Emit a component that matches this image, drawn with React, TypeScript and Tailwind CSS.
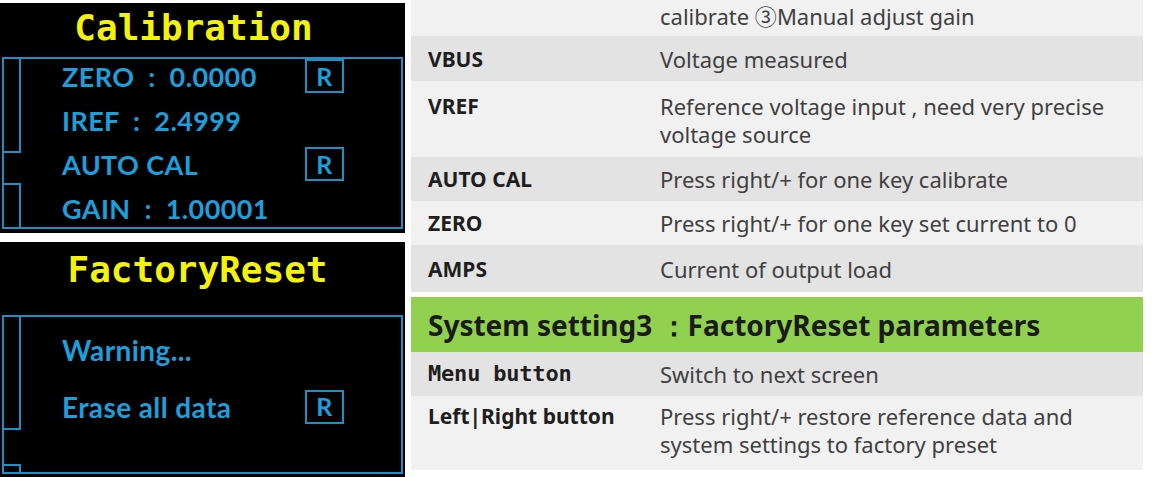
import React from "react";

const blue = "text-[#1c9fda]";

function RBox() {
  return (
    <div className="w-[39px] h-[34px] border-2 border-[#1b8fc6] flex items-center justify-center text-[#1c9fda] text-[25px] font-bold leading-none">
      R
    </div>
  );
}

function CalRow({ label, r, h }: { label: string; r?: boolean; h: string }) {
  return (
    <div className={`flex items-center ${h}`}>
      <div className="w-[284px] pl-[41px] whitespace-pre">{label}</div>
      {r ? <RBox /> : null}
    </div>
  );
}

function LeftPanels() {
  return (
    <div className="w-[405px] flex flex-col pt-[3px] gap-[9px] shrink-0">
      {/* Calibration */}
      <div className="h-[230px] bg-black flex flex-col">
        <div className="h-[54px] flex items-center justify-center pr-[18px] text-[#f2f20c] text-[36px] font-bold font-['DejaVu_Sans_Mono',monospace] leading-none pb-[4px]">
          Calibration
        </div>
        <div className="mx-[2px] h-[172px] border-2 border-[#1b8fc6] flex">
          <div className="w-[17px] flex flex-col shrink-0">
            <div className="h-[94px] border-r-2 border-b-2 border-[#1b8fc6]" />
            <div className="h-[30px]" />
            <div className="flex-1 border-r-2 border-t-2 border-[#1b8fc6]" />
          </div>
          <div className={`flex-1 flex flex-col gap-[10px] font-['Lato',sans-serif] font-bold text-[27px] tracking-[0.4px] leading-none ${blue}`}>
            <CalRow label="ZERO  :  0.0000" r h="h-[34px]" />
            <CalRow label="IREF  :  2.4999" h="h-[34px]" />
            <CalRow label="AUTO CAL" r h="h-[34px]" />
            <CalRow label="GAIN  :  1.00001" h="h-[34px]" />
          </div>
        </div>
      </div>
      {/* FactoryReset */}
      <div className="h-[235px] bg-black flex flex-col">
        <div className="h-[73px] flex items-start justify-center pr-[10px] pt-[10px] text-[#f2f20c] text-[36px] font-bold font-['DejaVu_Sans_Mono',monospace] leading-[36px]">
          FactoryReset
        </div>
        <div className="mx-[2px] h-[159px] border-2 border-[#1b8fc6] flex">
          <div className="w-[17px] flex flex-col shrink-0">
            <div className="h-[113px] border-r-2 border-b-2 border-[#1b8fc6]" />
            <div className="flex-1" />
            <div className="h-[8px] border-r-2 border-t-2 border-[#1b8fc6]" />
          </div>
          <div className={`flex-1 flex flex-col gap-[21px] pt-[16px] font-['Lato',sans-serif] font-bold text-[28px] tracking-[0.4px] leading-none ${blue}`}>
            <CalRow label="Warning..." h="h-[34px]" />
            <CalRow label="Erase all data" r h="h-[37px]" />
          </div>
        </div>
      </div>
    </div>
  );
}

function TRow({
  label,
  desc,
  dark,
  h,
  top,
  mono,
  lead = "leading-[28px]",
  pt = "pt-[10px]",
}: {
  label: string;
  desc: React.ReactNode;
  dark?: boolean;
  h: string;
  top?: boolean;
  mono?: boolean;
  lead?: string;
  pt?: string;
}) {
  return (
    <div
      className={`flex ${h} ${dark ? "bg-[#e3e3e3]" : "bg-[#f1f1f1]"} ${
        top ? `items-start ${pt}` : "items-center"
      }`}
    >
      <div
        className={`w-[249px] pl-[17px] shrink-0 font-bold text-[#1e1e1e] ${lead} ${
          mono
            ? "font-['DejaVu_Sans_Mono',monospace] text-[22px] tracking-[-0.2px]"
            : "font-['Noto_Sans',sans-serif] text-[21px]"
        }`}
      >
        {label}
      </div>
      <div className={`flex-1 font-['Noto_Sans',sans-serif] text-[22px] ${lead} text-[#404040]`}>
        {desc}
      </div>
    </div>
  );
}

function Table() {
  return (
    <div className="w-[732px] ml-[6px] flex flex-col shrink-0">
      <div className="h-[36px] bg-[#f1f1f1] flex items-center">
        <div className="w-[249px] shrink-0" />
        <div className="font-['Noto_Sans',sans-serif] text-[22px] text-[#404040] pb-[4px]">
          calibrate{" "}
          <span className="font-['Noto_Sans_CJK_SC',sans-serif]">③</span>Manual adjust gain
        </div>
      </div>
      <TRow label="VBUS" desc="Voltage measured" dark h="h-[45px]" />
      <TRow
        label="VREF"
        desc={
          <>
            Reference voltage input , need very precise
            <br />
            voltage source
          </>
        }
        h="h-[76px]"
        top
        pt="pt-[11px]"
      />
      <TRow label="AUTO CAL" desc="Press right/+ for one key calibrate" dark h="h-[44px]" />
      <TRow label="ZERO" desc="Press right/+ for one key set current to 0" h="h-[44px]" />
      <TRow label="AMPS" desc="Current of output load" dark h="h-[47px]" />
      <div className="h-[5px] bg-white" />
      <div className="h-[55px] bg-[#92d050] flex items-center pl-[17px] font-['Noto_Sans',sans-serif] font-bold text-[28px] text-[#1a1a1a]">
        System setting3 ：FactoryReset parameters
      </div>
      <TRow label="Menu button" desc="Switch to next screen" dark h="h-[44px]" mono />
      <TRow
        label="Left|Right button"
        desc={
          <>
            Press right/+ restore reference data and
            <br />
            system settings to factory preset
          </>
        }
        h="h-[74px]"
        top
        lead="leading-[28px]"
        pt="pt-[6px]"
      />
    </div>
  );
}

export default function App() {
  return (
    <div className="w-[1154px] h-[477px] bg-white flex overflow-hidden">
      <LeftPanels />
      <Table />
    </div>
  );
}
